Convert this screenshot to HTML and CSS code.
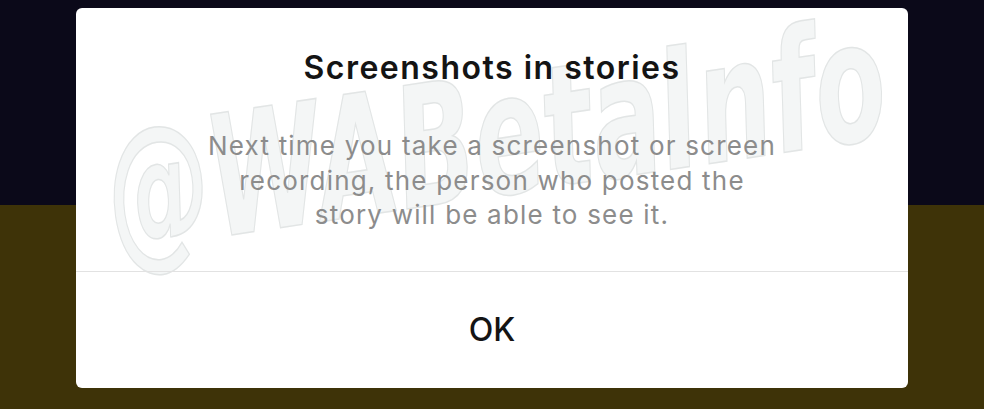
FILE: index.html
```html
<!DOCTYPE html>
<html lang="en">
<head>
<meta charset="utf-8">
<title>Screenshots in stories</title>
<link rel="stylesheet" href="styles.css">
</head>
<body>
  <div class="dialog">
    <div class="watermark" aria-hidden="true">@WABetaInfo</div>
    <div class="content">
      <h1 class="title">Screenshots in stories</h1>
      <p class="message">Next time you take a screenshot or screen<br>recording, the person who posted the<br>story will be able to see it.</p>
    </div>
    <div class="actions">
      <button class="ok">OK</button>
    </div>
  </div>
</body>
</html>
```
FILE: styles.css
```css
html, body {
  margin: 0;
  padding: 0;
}
body {
  width: 984px;
  height: 409px;
  overflow: hidden;
  background: linear-gradient(to bottom, #0b0919 0, #0b0919 205px, #3e3308 205px, #3e3308 100%);
  font-family: Inter, "Noto Sans", "Liberation Sans", sans-serif;
  padding-top: 8px;
  box-sizing: border-box;
}
.dialog {
  position: relative;
  width: 832px;
  height: 380px;
  margin: 0 auto;
  background: #ffffff;
  border-radius: 6px;
  overflow: hidden;
  display: flex;
  flex-direction: column;
}
.watermark {
  position: absolute;
  left: 44px;
  top: 102px;
  font-family: "Liberation Sans Narrow", "DejaVu Sans Condensed", "Liberation Sans", sans-serif;
  font-weight: 700;
  font-style: italic;
  font-size: 168px;
  line-height: 1;
  color: #f4f6f6;
  -webkit-text-stroke: 1.5px #e2e5e5;
  transform: rotate(-8.5deg) scaleX(0.68);
  transform-origin: left bottom;
  white-space: nowrap;
}
.content {
  position: relative;
  height: 263px;
  border-bottom: 1px solid #e2e2e2;
  display: flex;
  flex-direction: column;
  align-items: center;
}
.title {
  margin: 40px 0 0;
  font-size: 32px;
  line-height: 40px;
  font-weight: 600;
  color: #141414;
  letter-spacing: 1.5px;
}
.message {
  margin: 41px 0 0;
  font-size: 26px;
  line-height: 34.5px;
  font-weight: 400;
  color: #8c8c8c;
  text-align: center;
  letter-spacing: 1.2px;
}
.actions {
  position: relative;
  flex: 1;
  display: flex;
  align-items: center;
  justify-content: center;
}
.ok {
  border: 0;
  background: transparent;
  font-family: inherit;
  font-size: 32px;
  font-weight: 500;
  color: #141414;
  padding: 0;
  line-height: 40px;
}
```
